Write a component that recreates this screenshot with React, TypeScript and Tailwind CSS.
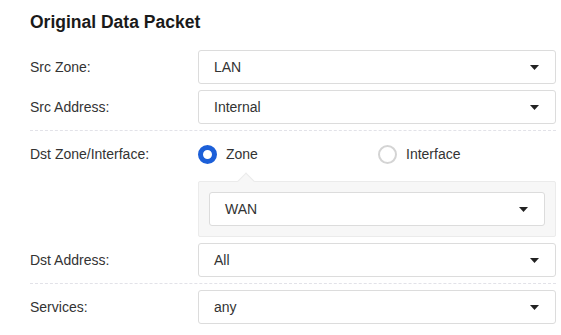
const Caret = () => (
  <svg width="9" height="5" viewBox="0 0 9 5" className="shrink-0">
    <path d="M0 0h9L4.5 5z" fill="#222" />
  </svg>
);

const Select = ({ value }: { value: string }) => (
  <div className="flex flex-1 items-center justify-between h-[34px] pl-[15px] pr-[16px] bg-white border border-[#dcdcdc] rounded-[3px] text-[14px] text-[#333]">
    <span>{value}</span>
    <Caret />
  </div>
);

const Row = ({
  label,
  children,
  className,
}: {
  label: string;
  children: React.ReactNode;
  className?: string;
}) => (
  <div className={`flex items-center ${className ?? ''}`}>
    <div className="w-[168px] shrink-0 text-[14px] text-[#333]">{label}</div>
    {children}
  </div>
);

const Radio = ({ checked, label }: { checked?: boolean; label: string }) => (
  <div className="flex items-center gap-[9px]">
    {checked ? (
      <span className="w-[19px] h-[19px] rounded-full border-[5px] border-[#1c5fd8] bg-white" />
    ) : (
      <span className="w-[19px] h-[19px] rounded-full border-2 border-[#d4d4d4] bg-white" />
    )}
    <span className="text-[14px] text-[#333]">{label}</span>
  </div>
);

export default function App() {
  return (
    <div
      className="w-[561px] h-[335px] bg-white pl-[30px] pr-[5px] pt-[12px]"
      style={{ fontFamily: '"Liberation Sans", Arial, sans-serif' }}
    >
      <h2 className="text-[17.5px] leading-[20px] font-bold text-[#1a1a1a] mb-[18px]">
        Original Data Packet
      </h2>

      <Row label="Src Zone:" className="h-[34px]">
        <Select value="LAN" />
      </Row>
      <Row label="Src Address:" className="h-[34px] mt-[6px]">
        <Select value="Internal" />
      </Row>

      <div className="mt-[6px] border-t border-dashed border-[#e2e2e8]" />

      <Row label="Dst Zone/Interface:" className="h-[34px] mt-[6px]">
        <div className="flex items-center">
          <div className="w-[180px]">
            <Radio checked label="Zone" />
          </div>
          <Radio label="Interface" />
        </div>
      </Row>

      <div className="flex mt-[10px]">
        <div className="w-[168px] shrink-0" />
        <div className="relative flex-1 bg-[#f7f7f7] border border-[#ebebeb] rounded-[2px] p-[10px]">
          <div className="absolute -top-[7px] left-[41px] w-[12px] h-[12px] rotate-45 bg-[#f7f7f7] border-l border-t border-[#ebebeb]" />
          <div className="relative flex">
            <Select value="WAN" />
          </div>
        </div>
      </div>

      <Row label="Dst Address:" className="h-[34px] mt-[6px]">
        <Select value="All" />
      </Row>

      <div className="mt-[6px] border-t border-dashed border-[#e2e2e8]" />

      <Row label="Services:" className="h-[34px] mt-[6px]">
        <Select value="any" />
      </Row>
    </div>
  );
}
